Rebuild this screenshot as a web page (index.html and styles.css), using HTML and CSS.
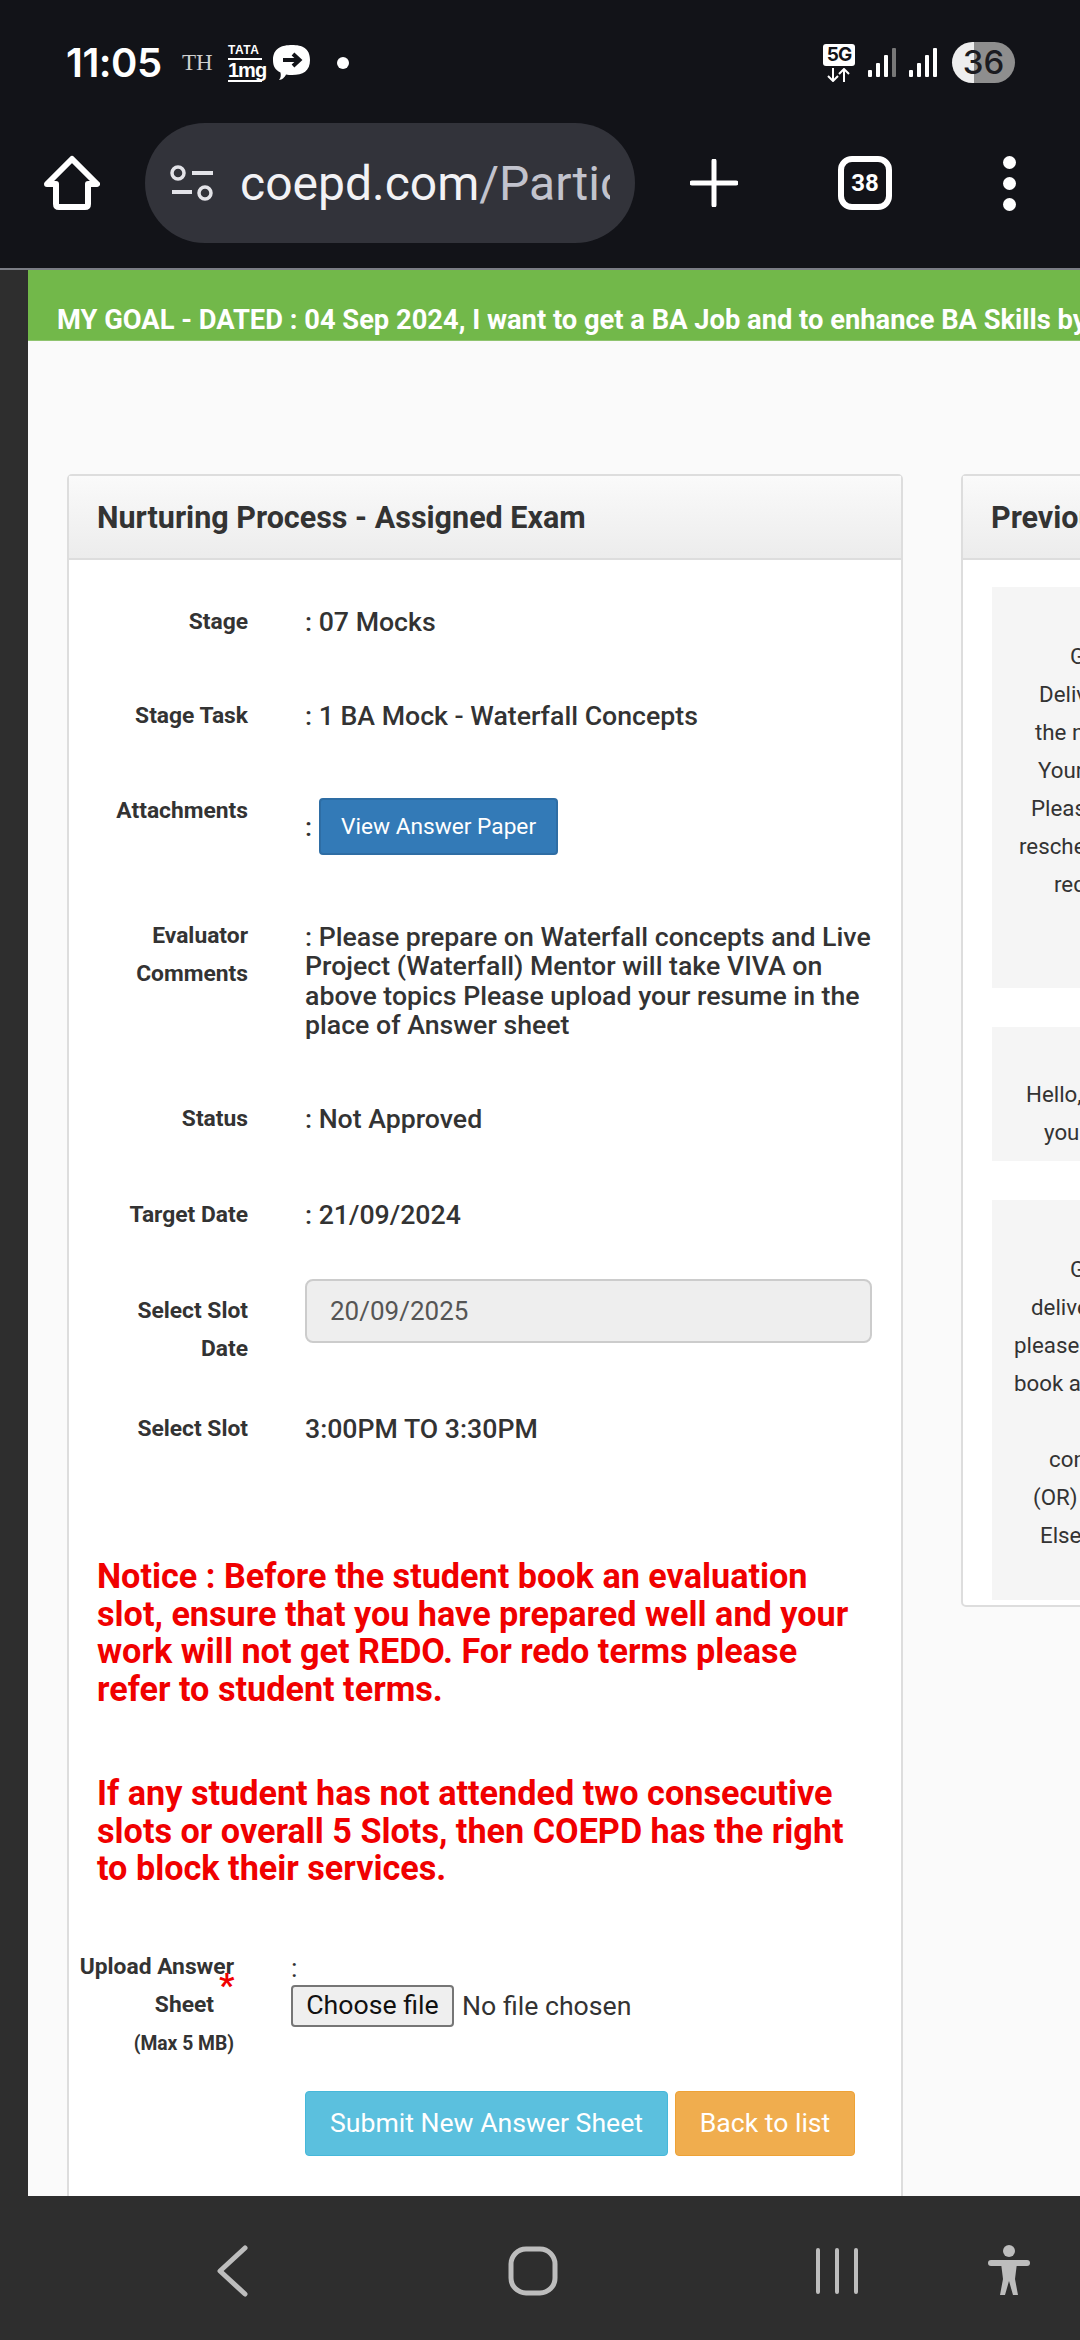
FILE: index.html
```html
<!DOCTYPE html>
<html lang="en">
<head>
<meta charset="utf-8">
<title>COEPD - Assigned Exam</title>
<link rel="stylesheet" href="styles.css">
</head>
<body>
<div class="phone">
  <header class="chrome">
    <div class="status">
      <div class="status-left">
        <span class="time">11:05</span>
        <span class="th">TH</span>
        <span class="tata"><span class="tata-top">TATA</span><span class="tata-bottom">1mg</span></span>
        <svg class="bubble" width="38" height="36" viewBox="0 0 38 36"><path d="M19 0C29 0 37 3 37 15C37 26 30 30 19 30C17 30 15 30 13 29.500C12 32 9 35 6 35C8 33 8 30 7.500 27.500C2 25 0 21 0 15C0 3 9 0 19 0Z" fill="#fff"/><path d="M10 15H26M20 9l6.500 6-6.500 6" fill="none" stroke="#121318" stroke-width="4"/></svg>
        <span class="dot"></span>
      </div>
      <div class="status-right">
        <span class="net"><span class="five-g">5G</span>
          <svg width="32" height="14" viewBox="0 0 32 14"><path d="M10 0V12M5 8l5 5 5-5M21 14V2M16 6l5-5 5 5" fill="none" stroke="#fff" stroke-width="2"/></svg>
        </span>
        <svg class="signal" width="28" height="30" viewBox="0 0 28 30"><g fill="#fff"><rect x="0" y="22" width="4" height="7" rx="1"/><rect x="8" y="15" width="4" height="14" rx="1"/><rect x="16" y="7" width="4" height="22" rx="1"/></g><rect x="24" y="0" width="4" height="29" rx="1" fill="#777"/></svg>
        <svg class="signal" width="28" height="30" viewBox="0 0 28 30"><g fill="#fff"><rect x="0" y="22" width="4" height="7" rx="1"/><rect x="8" y="15" width="4" height="14" rx="1"/><rect x="16" y="7" width="4" height="22" rx="1"/><rect x="24" y="0" width="4" height="29" rx="1"/></g></svg>
        <span class="battery">36</span>
      </div>
    </div>
    <div class="toolbar">
      <svg class="home" width="56" height="56" viewBox="0 0 56 56"><path d="M28 4L53 29H44V49Q44 52 41 52H15Q12 52 12 49V29H3Z" fill="none" stroke="#fff" stroke-width="6" stroke-linejoin="round"/></svg>
      <div class="omnibox">
        <svg width="44" height="40" viewBox="0 0 44 40"><g fill="none" stroke="#e3e3e8" stroke-width="3.500"><circle cx="8" cy="10" r="6"/><circle cx="35" cy="30" r="6"/></g><path d="M22 10H43M2 29H22" stroke="#e3e3e8" stroke-width="4"/></svg>
        <span class="url">coepd.com<span class="url-path">/Partic</span></span>
      </div>
      <svg class="plus" width="48" height="48" viewBox="0 0 48 48"><path d="M24 2V46M2 24H46" stroke="#fff" stroke-width="5" stroke-linecap="round"/></svg>
      <span class="tabs">38</span>
      <span class="menu"><i></i><i></i><i></i></span>
    </div>
  </header>

  <main class="viewport">
    <div class="strip"></div>
    <div class="page">
      <div class="goal">MY GOAL - DATED : 04 Sep 2024, I want to get a BA Job and to enhance BA Skills by</div>
      <div class="columns">
        <section class="panel main-panel">
          <h2 class="panel-head">Nurturing Process - Assigned Exam</h2>
          <div class="panel-body">
            <div class="row"><div class="label">Stage</div><div class="value">: 07 Mocks</div></div>
            <div class="row"><div class="label">Stage Task</div><div class="value">: 1 BA Mock - Waterfall Concepts</div></div>
            <div class="row row-attach"><div class="label">Attachments</div><div class="value value-attach"><span>:</span><a class="btn btn-primary">View Answer Paper</a></div></div>
            <div class="row row-comments"><div class="label">Evaluator<br>Comments</div><div class="value value-multi">: Please prepare on Waterfall concepts and Live Project (Waterfall) Mentor will take VIVA on above topics Please upload your resume in the place of Answer sheet</div></div>
            <div class="row row-status"><div class="label">Status</div><div class="value">: Not Approved</div></div>
            <div class="row row-target"><div class="label">Target Date</div><div class="value">: 21/09/2024</div></div>
            <div class="row row-date"><div class="label">Select Slot<br>Date</div><div class="value"><div class="date-input">20/09/2025</div></div></div>
            <div class="row row-slot"><div class="label">Select Slot</div><div class="value">3:00PM TO 3:30PM</div></div>
            <p class="notice">Notice : Before the student book an evaluation slot, ensure that you have prepared well and your work will not get REDO. For redo terms please refer to student terms.</p>
            <p class="notice notice-two">If any student has not attended two consecutive slots or overall 5 Slots, then COEPD has the right to block their services.</p>
            <div class="upload">
              <div class="upload-label">
                <div>Upload Answer</div>
                <div class="indent">Sheet</div>
                <div class="indent small">(Max 5 MB)</div>
                <span class="star">*</span>
              </div>
              <div class="upload-value">
                <div class="upload-colon">:</div>
                <div class="file"><span class="file-btn">Choose file</span><span>No file chosen</span></div>
              </div>
            </div>
            <div class="actions"><a class="btn btn-info">Submit New Answer Sheet</a><a class="btn btn-warning">Back to list</a></div>
          </div>
        </section>

        <section class="panel side-panel">
          <h2 class="panel-head">Previous Comments</h2>
          <div class="side-body">
            <div class="note note-a">
              <div class="n1">Greetings</div>
              <div class="n2">Delivery</div>
              <div class="n3">the next</div>
              <div class="n4">Your</div>
              <div class="n5">Please</div>
              <div class="n6">reschedule</div>
              <div class="n7">request</div>
            </div>
            <div class="note note-b">
              <div class="n8">Hello,</div>
              <div class="n9">your</div>
            </div>
            <div class="note note-c">
              <div class="n1">Greetings</div>
              <div class="n10">delivery</div>
              <div class="n11">please</div>
              <div class="n11">book a</div>
              <div class="blank"></div>
              <div class="n12">contact</div>
              <div class="n13">(OR)</div>
              <div class="n14">Else</div>
            </div>
          </div>
        </section>
      </div>
    </div>
  </main>

  <footer class="navbar">
    <svg class="nav-back" width="36" height="52" viewBox="0 0 36 52"><path d="M31 3L6 26L31 49" fill="none" stroke="#bdbdbd" stroke-width="5" stroke-linecap="round" stroke-linejoin="round"/></svg>
    <svg class="nav-home" width="50" height="50" viewBox="0 0 50 50"><rect x="3" y="3" width="44" height="44" rx="15" fill="none" stroke="#bdbdbd" stroke-width="5"/></svg>
    <svg class="nav-recent" width="44" height="46" viewBox="0 0 44 46"><path d="M3 2V44M22 2V44M41 2V44" stroke="#bdbdbd" stroke-width="4" stroke-linecap="round"/></svg>
    <svg class="nav-a11y" width="42" height="52" viewBox="0 0 42 52"><circle cx="21" cy="6" r="6" fill="#bdbdbd"/><path d="M3 18H39" stroke="#bdbdbd" stroke-width="6" stroke-linecap="round"/><path d="M13 18H29L27 34L30 50H25L21 36L17 50H12L15 34Z" fill="#bdbdbd"/></svg>
  </footer>
</div>
</body>
</html>
```
FILE: styles.css
```css
* { box-sizing: border-box; }
html, body { margin: 0; padding: 0; }
body { font-family: "Roboto", "Liberation Sans", sans-serif; color: #333; background: #121318; }
.phone { width: 1080px; height: 2340px; display: flex; flex-direction: column; overflow: hidden; }

/* browser chrome */
.chrome { height: 270px; flex: none; background: #121318; border-bottom: 2px solid #7b7d85; color: #fff; }
.status { height: 123px; display: flex; justify-content: space-between; padding: 42px 65px 0 66px; }
.status-left { display: flex; align-items: center; height: 41px; }
.time { font-family: "Inter", sans-serif; font-size: 40px; font-weight: 600; width: 116px; letter-spacing: -0.5px; }
.th { font-family: "Liberation Serif", serif; font-size: 23px; color: #cfcfcf; width: 46px; }
.tata { width: 45px; display: flex; flex-direction: column; align-items: flex-start; font-family: "Liberation Sans", sans-serif; font-weight: 700; line-height: 1; }
.tata-top { font-size: 12px; letter-spacing: 0.5px; border-bottom: 2px solid #fff; padding-bottom: 2px; width: 34px; }
.tata-bottom { font-size: 20px; letter-spacing: -1px; border-bottom: 2px solid #fff; width: 34px; }
.bubble { margin-right: 26px; }
.dot { width: 12px; height: 12px; border-radius: 50%; background: #fff; }
.status-right { display: flex; align-items: center; height: 41px; }
.net { width: 45px; display: flex; flex-direction: column; align-items: flex-start; gap: 2px; }
.five-g { width: 32px; height: 22px; background: #fff; color: #121318; border-radius: 3px; font-family: "Inter", sans-serif; font-size: 19px; font-weight: 700; line-height: 22px; text-align: center; letter-spacing: -1px; }
.signal { margin-right: 13px; }
.battery { width: 63px; height: 41px; border-radius: 21px; background: linear-gradient(90deg, #eeeeee 0 35%, #8e8e8e 35% 100%); color: #1b1b20; font-family: "Inter", sans-serif; font-size: 33px; font-weight: 500; line-height: 41px; text-align: center; margin-left: 2px; }

.toolbar { display: flex; align-items: center; height: 120px; padding-left: 44px; }
.home { margin-right: 45px; }
.omnibox { width: 490px; height: 120px; border-radius: 60px; background: #32333a; display: flex; align-items: center; padding-left: 25px; margin-right: 55px; overflow: hidden; flex: none; }
.url { font-size: 48px; color: #f2f2f5; margin-left: 26px; width: 370px; overflow: hidden; white-space: nowrap; flex: none; }
.url-path { color: #c2c3cd; }
.plus { margin-right: 100px; }
.tabs { width: 54px; height: 54px; border: 6px solid #fff; border-radius: 14px; font-size: 24px; font-weight: 700; line-height: 42px; text-align: center; margin-right: 111px; }
.menu { display: flex; flex-direction: column; gap: 8px; width: 16px; }
.menu i { width: 13px; height: 13px; border-radius: 50%; background: #fff; display: block; }

/* viewport */
.viewport { flex: 1; display: flex; min-height: 0; background: #fafafa; overflow: hidden; }
.strip { width: 28px; flex: none; background: #2e2e2e; }
.page { flex: 1; min-width: 0; overflow: hidden; }
.goal { height: 71px; background: #72b84a; color: #fff; font-size: 27.300px; font-weight: 700; line-height: 26px; padding: 37px 0 0 29px; white-space: nowrap; overflow: hidden; border-bottom: 1px solid #8fc46f; }
.columns { display: flex; align-items: flex-start; gap: 58px; padding: 133px 0 0 39px; width: 1900px; }

.panel { background: #fff; border: 2px solid #dddddd; border-radius: 5px; flex: none; }
.main-panel { width: 836px; }
.side-panel { width: 835px; }
.panel-head { height: 84px; margin: 0; padding: 0 28px; font-size: 30.500px; font-weight: 700; line-height: 84px; color: #333; background: linear-gradient(#fafafa, #ececec); border-bottom: 2px solid #dddddd; white-space: nowrap; }

/* form rows */
.panel-body { padding: 43px 0 60px; }
.row { display: flex; margin-bottom: 56px; font-size: 26.700px; }
.label { width: 179px; flex: none; font-size: 22.800px; font-weight: 700; line-height: 38px; text-align: right; }
.row-attach .label { padding-top: 1px; }
.value { margin-left: 57px; width: 570px; line-height: 38px; color: #333; font-weight: 500; }
.value-attach { display: flex; align-items: center; gap: 7px; height: 57px; margin-top: 7px; }
.row-attach { height: 70px; }
.value-multi { line-height: 29.300px; padding-top: 6px; }
.row-comments { height: 127px; }
.row-status { margin-bottom: 58px; }
.row-target { margin-bottom: 58px; }
.btn { display: inline-block; color: #fff; font-weight: 400; text-align: center; border-radius: 4px; }
.btn-primary { width: 239px; height: 57px; background: #337ab7; border: 2px solid #2e6da4; font-size: 22.700px; line-height: 53px; }
.btn-info { width: 363px; height: 65px; background: #5bc0de; border: 1px solid #46b8da; font-size: 26.600px; line-height: 62px; }
.btn-warning { width: 180px; height: 65px; background: #f0ad4e; border: 1px solid #eea236; font-size: 26.600px; line-height: 62px; }
.row-date { margin-bottom: 42px; height: 76px; }
.date-input { width: 567px; height: 64px; margin-top: -13px; background: #eeeeee; border: 2px solid #cccccc; border-radius: 8px; color: #555; font-size: 26px; font-weight: 400; line-height: 60px; padding-left: 23px; }
.row-slot { margin-bottom: 0; height: 38px; }
.notice { margin: 110px 28px 0 28px; color: #f00000; font-size: 34.200px; font-weight: 700; line-height: 37.500px; }
.notice-two { margin-top: 67px; }

.upload { display: flex; margin-top: 60px; }
.upload-label { position: relative; width: 165px; flex: none; font-size: 22.800px; font-weight: 700; line-height: 38.500px; text-align: right; }
.indent { padding-right: 20px; }
.small { font-size: 19.300px; padding-right: 0; }
.star { position: absolute; left: 150px; top: 18px; color: #f00000; font-size: 34px; font-weight: 700; line-height: 38px; }
.upload-value { margin-left: 57px; font-size: 26.700px; font-weight: 400; }
.upload-colon { line-height: 33px; margin-top: 4px; }
.file { display: flex; align-items: center; gap: 8px; color: #333; }
.file-btn { width: 163px; height: 42px; background: #efefef; border: 2px solid #767676; border-radius: 4px; color: #111; font-size: 26.700px; line-height: 36px; text-align: center; }
.actions { display: flex; gap: 7px; margin: 28px 0 0 236px; }

/* side panel */
.side-body { padding: 27px 29px 5px; display: flex; flex-direction: column; gap: 39px; }
.note { width: 760px; background: #f5f5f5; font-size: 22.300px; line-height: 38px; color: #333; white-space: nowrap; }
.blank { height: 38px; }
.note-a { height: 401px; padding-top: 50px; }
.note-b { height: 134px; padding-top: 48px; }
.note-c { height: 400px; padding-top: 50px; }
.n1 { padding-left: 78px; }
.n2 { padding-left: 47px; }
.n3 { padding-left: 43px; }
.n4 { padding-left: 46px; }
.n5 { padding-left: 39px; }
.n6 { padding-left: 27px; }
.n7 { padding-left: 62px; }
.n8 { padding-left: 34px; }
.n9 { padding-left: 52px; }
.n10 { padding-left: 39px; }
.n11 { padding-left: 22px; }
.n12 { padding-left: 57px; }
.n13 { padding-left: 41px; }
.n14 { padding-left: 48px; }

/* navbar */
.navbar { height: 144px; flex: none; background: #2e2e2e; display: flex; align-items: center; padding: 6px 0 0 214px; }
.nav-back { margin-right: 258px; }
.nav-home { margin-right: 257px; }
.nav-recent { margin-right: 129px; }
```
